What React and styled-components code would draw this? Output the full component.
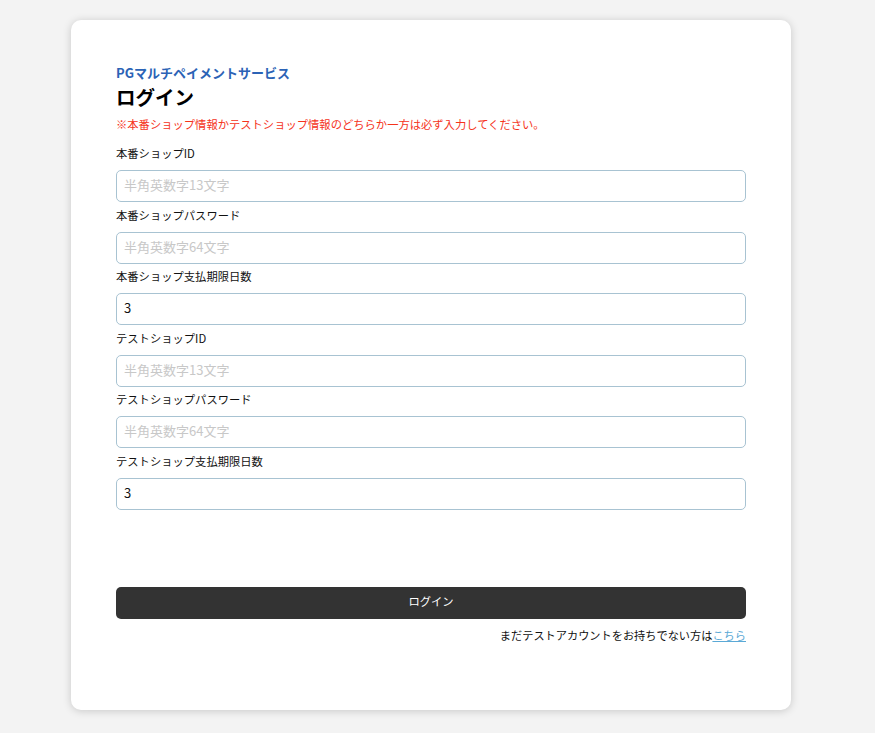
import styled, { createGlobalStyle } from "styled-components";

const GlobalStyle = createGlobalStyle`
  html, body {
    margin: 0;
    padding: 0;
    background: #f3f3f3;
  }
  body {
    font-family: "Noto Sans CJK JP", "Noto Sans", sans-serif;
    color: #222;
  }
  * {
    box-sizing: border-box;
  }
`;

const Page = styled.div`
  padding: 20px 0 23px 71px;
`;

const Card = styled.div`
  width: 720px;
  background: #fff;
  border-radius: 10px;
  box-shadow: 0 1px 8px rgba(0, 0, 0, 0.18);
  padding: 44px 45px 66px;
`;

const Service = styled.div`
  font-size: 13px;
  font-weight: bold;
  line-height: 18px;
  color: #2b63b6;
`;

const Title = styled.h1`
  margin: 2px 0 0;
  font-size: 19.5px;
  font-weight: bold;
  line-height: 26px;
  color: #000;
`;

const Notice = styled.p`
  margin: 5px 0 0;
  font-size: 11.3px;
  line-height: 18px;
  color: #f5331b;
`;

const Fields = styled.div`
  margin-top: 11px;
  display: flex;
  flex-direction: column;
  gap: 3.6px;
`;

const Field = styled.label`
  display: flex;
  flex-direction: column;
  gap: 8px;
`;

const Label = styled.span`
  font-size: 11.3px;
  line-height: 18px;
  color: #111;
`;

const Input = styled.input`
  width: 100%;
  height: 32px;
  border: 1px solid #a8c3d2;
  border-radius: 5px;
  padding: 0 7px 3px;
  font-family: inherit;
  font-size: 13px;
  color: #111;
  background: #fff;
  outline: none;

  &::placeholder {
    color: #c8c8c8;
  }
`;

const Button = styled.button`
  margin-top: 77px;
  width: 100%;
  height: 32px;
  border: none;
  border-radius: 5px;
  padding: 0 0 4px;
  background: #333;
  color: #fff;
  font-family: inherit;
  font-size: 11.3px;
  cursor: pointer;
`;

const Signup = styled.p`
  margin: 7px 0 0;
  text-align: right;
  font-size: 11.2px;
  line-height: 18px;
  color: #111;

  a {
    color: #5ba9d6;
    text-decoration: underline;
  }
`;

const fields = [
  { label: "本番ショップID", placeholder: "半角英数字13文字" },
  { label: "本番ショップパスワード", placeholder: "半角英数字64文字", type: "password" },
  { label: "本番ショップ支払期限日数", value: "3" },
  { label: "テストショップID", placeholder: "半角英数字13文字" },
  { label: "テストショップパスワード", placeholder: "半角英数字64文字", type: "password" },
  { label: "テストショップ支払期限日数", value: "3" },
];

export default function App() {
  return (
    <Page>
      <GlobalStyle />
      <Card>
        <Service>PGマルチペイメントサービス</Service>
        <Title>ログイン</Title>
        <Notice>※本番ショップ情報かテストショップ情報のどちらか一方は必ず入力してください。</Notice>
        <Fields>
          {fields.map((f) => (
            <Field key={f.label}>
              <Label>{f.label}</Label>
              <Input
                type={f.type || "text"}
                placeholder={f.placeholder}
                defaultValue={f.value}
              />
            </Field>
          ))}
        </Fields>
        <Button>ログイン</Button>
        <Signup>
          まだテストアカウントをお持ちでない方は<a href="#">こちら</a>
        </Signup>
      </Card>
    </Page>
  );
}
